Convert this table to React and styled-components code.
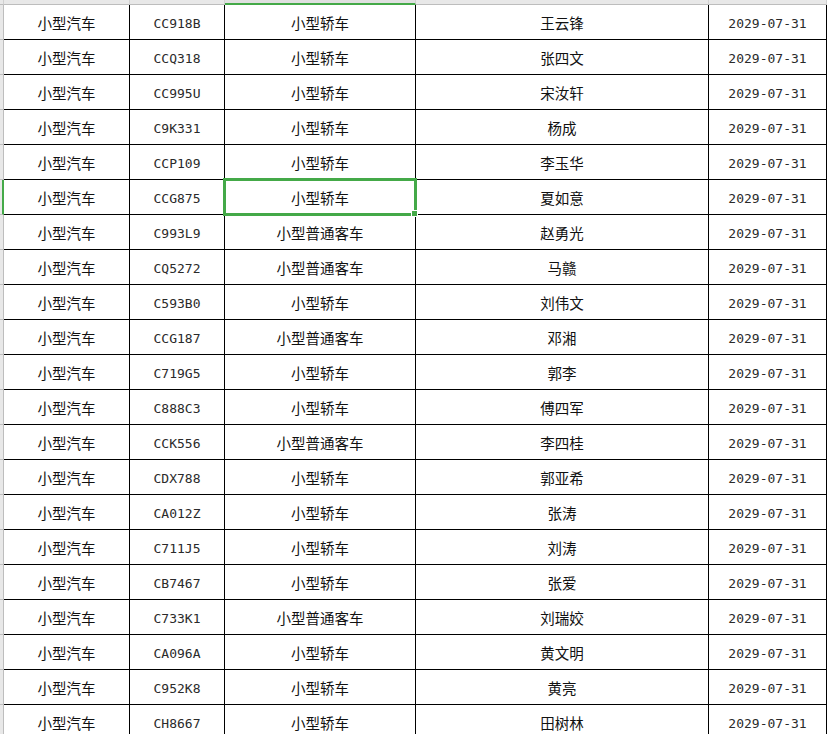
import styled, { createGlobalStyle, css } from "styled-components";

const GlobalStyle = createGlobalStyle`
  html, body {
    margin: 0;
    padding: 0;
    background: #ffffff;
    overflow: hidden;
  }
`;

const GREEN = "#44a948";
const COLS = "4px 126px 95px 191px 293px 118px";

const Sheet = styled.div`
  width: 828px;
  height: 734px;
  overflow: hidden;
  background: #ffffff;
`;

const HeaderStrip = styled.div`
  display: grid;
  grid-template-columns: ${COLS};
  height: 5px;
`;

const ColHead = styled.div`
  background: #e8e8e8;
  border-bottom: 1px solid #bdbdbd;
  border-right: 1px solid #d0d0d0;
  ${(p) =>
    p.$active &&
    css`
      background: #e0e0e0;
      border-bottom: 2px solid ${GREEN};
    `}
`;

const Row = styled.div`
  display: grid;
  grid-template-columns: ${COLS};
  height: 35px;
`;

const RowHead = styled.div`
  background: #e8e8e8;
  border-right: 1px solid #bdbdbd;
  border-bottom: 1px solid #bdbdbd;
  ${(p) =>
    p.$active &&
    css`
      border-right: 2px solid ${GREEN};
    `}
`;

const Cell = styled.div`
  position: relative;
  display: flex;
  align-items: center;
  justify-content: center;
  padding-top: ${(p) => (p.$mono ? "3px" : "1px")};
  box-sizing: border-box;
  border-right: 1px solid #000;
  border-bottom: 1px solid #000;
  color: ${(p) => (p.$mono ? "#2a2a2a" : "#111")};
  white-space: nowrap;
  font-family: ${(p) =>
    p.$mono
      ? `"DejaVu Sans Mono", "Liberation Mono", monospace`
      : `"Noto Sans CJK SC", "Noto Sans", sans-serif`};
  font-size: ${(p) => (p.$mono ? "13px" : "14.5px")};
`;

const Selection = styled.div`
  position: absolute;
  left: -2px;
  top: -2px;
  right: -2px;
  bottom: -2px;
  border: 3px solid ${GREEN};
  pointer-events: none;
  z-index: 2;
`;

const FillHandle = styled.div`
  position: absolute;
  right: -4px;
  bottom: -4px;
  width: 5px;
  height: 5px;
  background: ${GREEN};
  border: 1px solid #fff;
`;

const rows = [
  ["CC918B", "小型轿车", "王云锋"],
  ["CCQ318", "小型轿车", "张四文"],
  ["CC995U", "小型轿车", "宋汝轩"],
  ["C9K331", "小型轿车", "杨成"],
  ["CCP109", "小型轿车", "李玉华"],
  ["CCG875", "小型轿车", "夏如意"],
  ["C993L9", "小型普通客车", "赵勇光"],
  ["CQ5272", "小型普通客车", "马赣"],
  ["C593B0", "小型轿车", "刘伟文"],
  ["CCG187", "小型普通客车", "邓湘"],
  ["C719G5", "小型轿车", "郭李"],
  ["C888C3", "小型轿车", "傅四军"],
  ["CCK556", "小型普通客车", "李四桂"],
  ["CDX788", "小型轿车", "郭亚希"],
  ["CA012Z", "小型轿车", "张涛"],
  ["C711J5", "小型轿车", "刘涛"],
  ["CB7467", "小型轿车", "张爱"],
  ["C733K1", "小型普通客车", "刘瑞姣"],
  ["CA096A", "小型轿车", "黄文明"],
  ["C952K8", "小型轿车", "黄亮"],
  ["CH8667", "小型轿车", "田树林"],
];

const SELECTED_ROW = 5;

export default function App() {
  return (
    <Sheet>
      <GlobalStyle />
      <HeaderStrip>
        <ColHead />
        <ColHead />
        <ColHead />
        <ColHead $active />
        <ColHead />
        <ColHead />
      </HeaderStrip>
      {rows.map(([plate, type, name], i) => {
        const sel = i === SELECTED_ROW;
        return (
          <Row key={plate}>
            <RowHead $active={sel} />
            <Cell>小型汽车</Cell>
            <Cell $mono>{plate}</Cell>
            <Cell>
              {type}
              {sel && (
                <Selection>
                  <FillHandle />
                </Selection>
              )}
            </Cell>
            <Cell>{name}</Cell>
            <Cell $mono>2029-07-31</Cell>
          </Row>
        );
      })}
    </Sheet>
  );
}
